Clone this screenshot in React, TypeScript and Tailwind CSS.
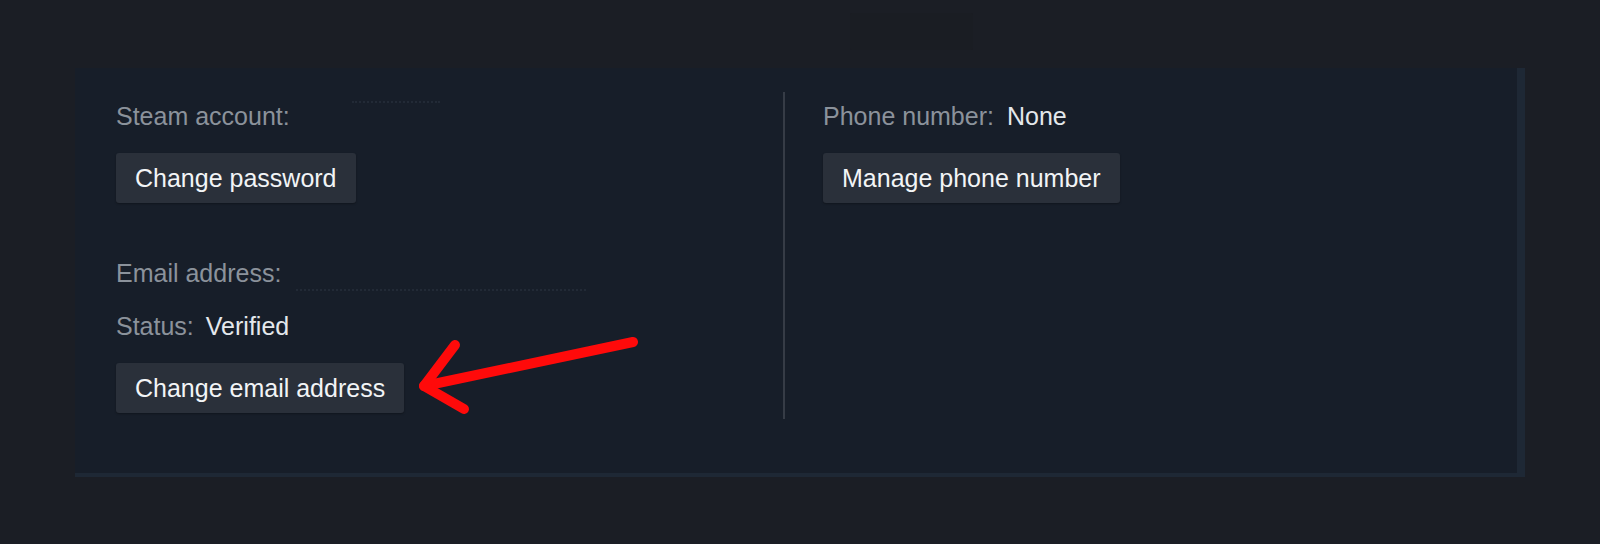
import React from "react";

const font = { fontFamily: '"Liberation Sans", Arial, sans-serif' };

function Btn({ children }: { children: React.ReactNode }) {
  return (
    <button className="h-[50px] px-[19px] bg-[#2a303a] rounded-[3px] text-[25px] leading-[30px] text-[#f2f4f6] shadow-[0_1px_2px_rgba(0,0,0,0.3)]">
      {children}
    </button>
  );
}

export default function App() {
  return (
    <div className="relative w-[1600px] h-[544px] bg-[#1b1e25] overflow-hidden" style={font}>
      {/* blurred page title */}
      <div className="pt-[13px]">
        <div className="ml-[850px] w-[123px] h-[37px] bg-[#1a1d23] rounded-[2px]" />
      </div>

      <div className="mt-[18px] ml-[75px] w-[1450px] bg-[#171e29] border-r-8 border-b-4 border-[#1e2835] pt-[24px] pb-[54px]">
        <div className="flex">
          {/* left column */}
          <div className="w-[708px] pl-[41px] pt-[9px] pb-[6px] flex flex-col items-start">
            <div className="relative text-[25px] leading-[30px] text-[#8b929b]">
              Steam account:
              <span className="absolute left-[236px] top-0 w-[88px] border-t-2 border-dotted border-[#222a36]" />
            </div>
            <div className="mt-[22px]">
              <Btn>Change password</Btn>
            </div>

            <div className="relative mt-[55px] text-[25px] leading-[30px] text-[#8b929b]">
              Email address:
              <span className="absolute left-[180px] top-[31px] w-[290px] border-t-2 border-dotted border-[#222a36]" />
            </div>
            <div className="mt-[23px] text-[25px] leading-[30px] text-[#8b929b]">
              Status:<span className="ml-[12px] text-[#e4e8ec]">Verified</span>
            </div>
            <div className="mt-[22px]">
              <Btn>Change email address</Btn>
            </div>
          </div>

          {/* right column */}
          <div className="flex-1 border-l-2 border-[#363c46] pl-[38px] pt-[9px] flex flex-col items-start">
            <div className="text-[25px] leading-[30px] text-[#8b929b]">
              Phone number:<span className="ml-[13px] text-[#e4e8ec]">None</span>
            </div>
            <div className="mt-[22px]">
              <Btn>Manage phone number</Btn>
            </div>
          </div>
        </div>
      </div>

      {/* annotation arrow */}
      <svg className="absolute left-0 top-0 pointer-events-none" width="1600" height="544">
        <g stroke="#ff0a0a" strokeWidth="10" strokeLinecap="round" strokeLinejoin="round" fill="none">
          <line x1="633" y1="342" x2="424" y2="386" />
          <polyline points="455,345 424,386 464,409" />
        </g>
      </svg>
    </div>
  );
}
